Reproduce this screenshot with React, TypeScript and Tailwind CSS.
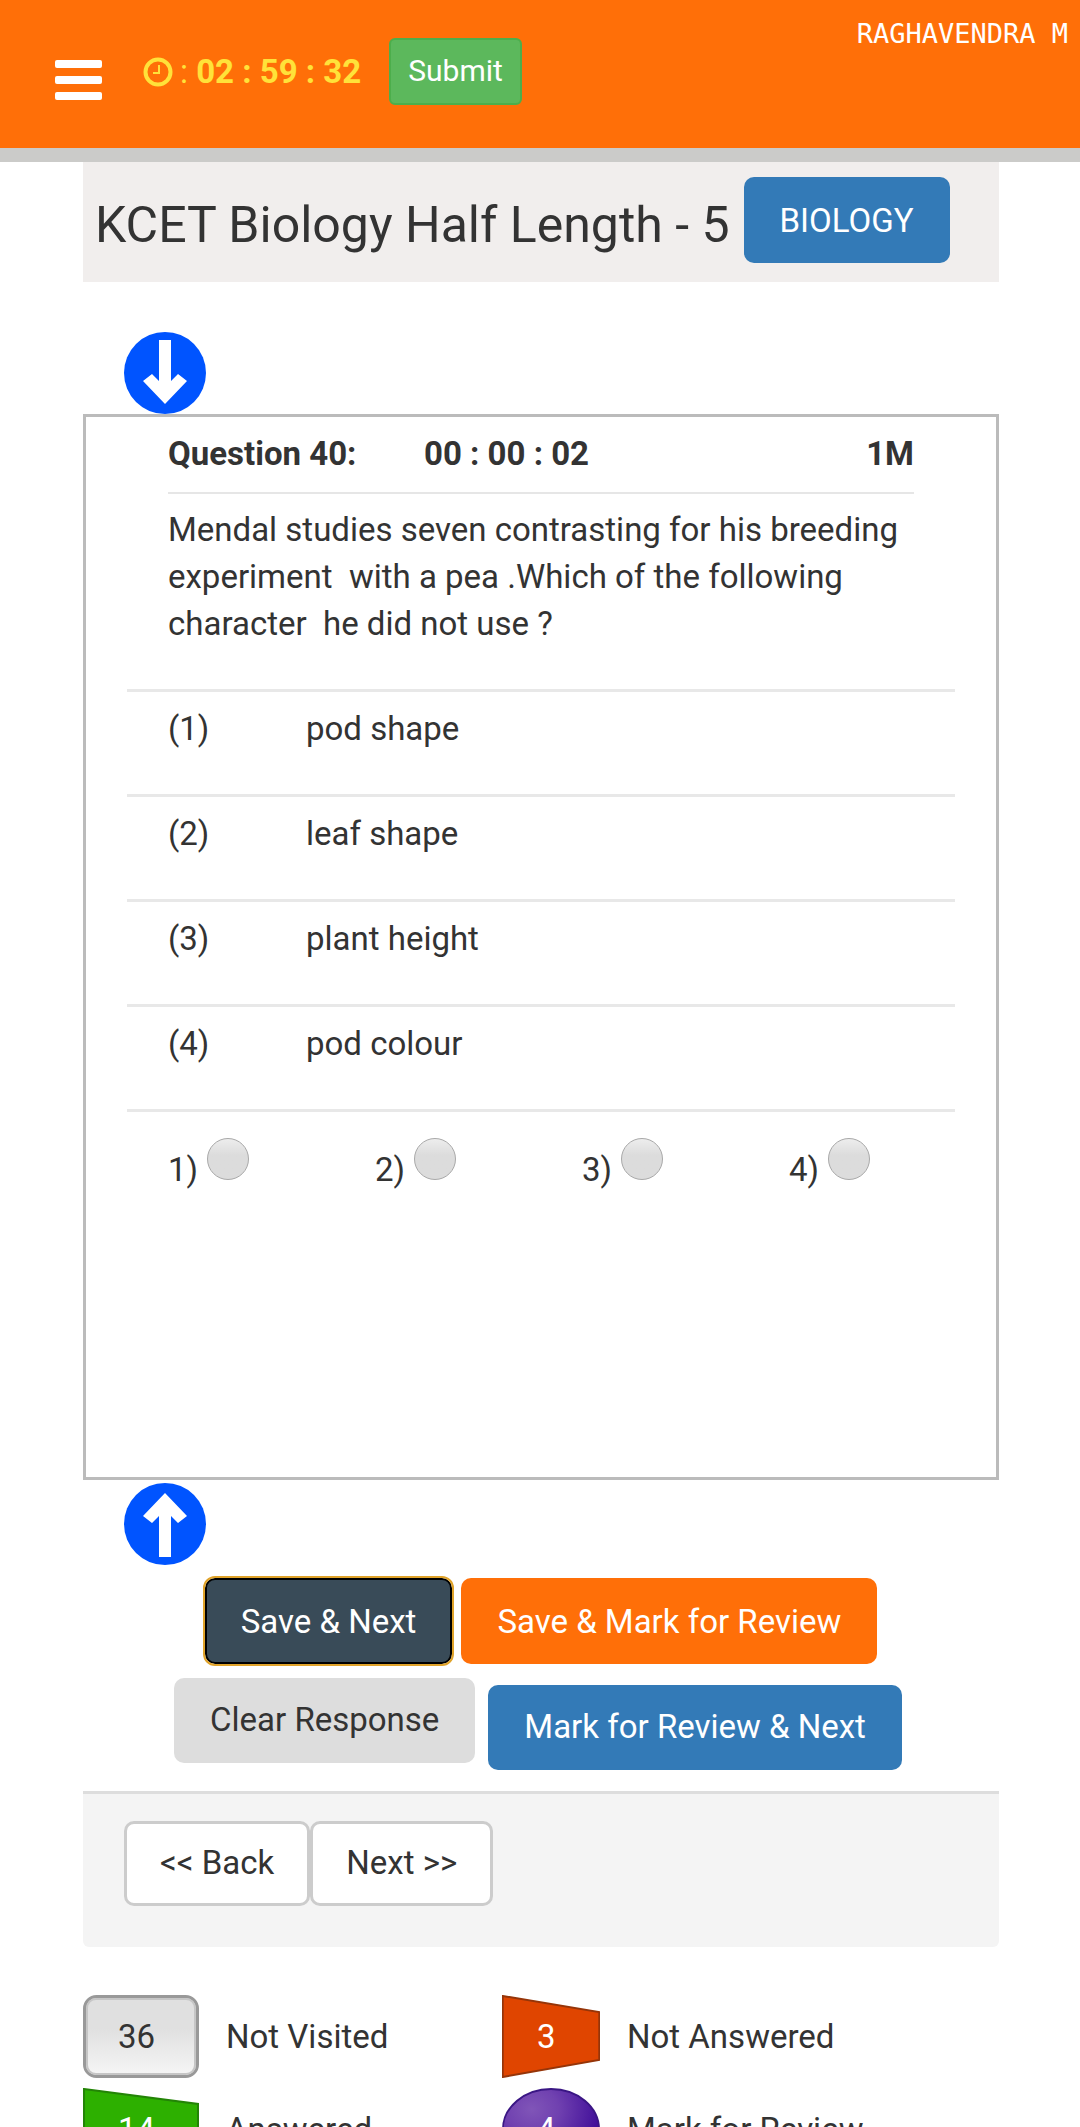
import { useState } from "react";
import type { ReactNode } from "react";

const options = ["pod shape", "leaf shape", "plant height", "pod colour"];

const actionButton = "rounded-[10px] px-[36px] text-white";

function ArrowCircle({ up = false }: { up?: boolean }) {
  return (
    <svg viewBox="0 0 82 82" className="block size-[82px]" aria-hidden="true">
      <circle cx="41" cy="41" r="41" fill="#0054ff" />
      <path
        d="M35 8h12v41l7-7 9 7-22 23-22-23 9-7 7 7z"
        fill="#fff"
        transform={up ? "rotate(180 41 41)" : undefined}
      />
    </svg>
  );
}

function ClockIcon() {
  return (
    <svg viewBox="0 0 30 30" className="size-[30px]" fill="none" stroke="currentColor" aria-hidden="true">
      <circle cx="15" cy="15" r="12.5" strokeWidth="4" />
      <path d="M16 8v8h-6" strokeWidth="2" />
    </svg>
  );
}

function LegendItem({
  count,
  label,
  badgeClass,
  shape,
}: {
  count: number;
  label: string;
  badgeClass: string;
  shape: ReactNode;
}) {
  return (
    <li className="flex items-center gap-[27px]">
      <span className={`relative flex h-[83px] items-center ${badgeClass}`}>
        <svg
          viewBox="0 0 116 83"
          preserveAspectRatio="none"
          className="absolute inset-0 size-full"
          aria-hidden="true"
        >
          {shape}
        </svg>
        <span className="relative">{count}</span>
      </span>
      {label}
    </li>
  );
}

export default function App() {
  const [answer, setAnswer] = useState<number | null>(null);

  return (
    <div className="bg-white font-['Roboto',sans-serif] text-[33px] leading-[47px] text-[#333]">
      <header className="flex h-[162px] items-start border-b-[14px] border-[#cbcbc9] bg-[#ff6f08] pr-[12px] pl-[55px]">
        <button type="button" aria-label="Menu" className="mt-[60px] flex flex-col gap-[8px]">
          <span className="h-[8px] w-[47px] rounded-[2px] bg-white" />
          <span className="h-[8px] w-[47px] rounded-[2px] bg-white" />
          <span className="h-[8px] w-[47px] rounded-[2px] bg-white" />
        </button>
        <div className="mt-[48px] ml-[41px] flex items-center text-[#ffe23a]">
          <ClockIcon />
          <span className="ml-[7px] whitespace-pre">: </span>
          <span className="font-bold">02 : 59 : 32</span>
        </div>
        <button
          type="button"
          className="mt-[38px] ml-[28px] h-[67px] rounded-[6px] border-2 border-[#4cae4c] bg-[#5cb85c] px-[17px] pb-[2px] text-[30px] text-white"
        >
          Submit
        </button>
        <span className="mt-[10px] ml-auto font-['DejaVu_Sans_Mono',monospace] text-[27px] text-white">
          RAGHAVENDRA M
        </span>
      </header>

      <main className="pr-[81px] pl-[83px]">
        <div className="flex h-[120px] items-start gap-[14px] bg-[#f1eeed] pl-[12px]">
          <h1 className="mt-[36px] text-[50px] leading-[55px]">KCET Biology Half Length - 5</h1>
          <button type="button" className={`mt-[15px] h-[86px] bg-[#337ab7] ${actionButton}`}>
            BIOLOGY
          </button>
        </div>

        <button type="button" aria-label="Scroll down" className="mt-[50px] ml-[41px] block">
          <ArrowCircle />
        </button>

        <section className="border-[3px] border-[#bbb] px-[41px] pb-[284px]">
          <div className="px-[41px] pt-[13px] pb-[42px]">
            <div className="flex border-b-2 border-[#e6e6e6] pb-[15px] font-bold">
              <h2 className="w-[256px]">Question 40:</h2>
              <span>00 : 00 : 02</span>
              <span className="ml-auto">1M</span>
            </div>
            <p className="mt-[12px] whitespace-pre-wrap">
              {"Mendal studies seven contrasting for his breeding experiment  with a pea .Which of the following character  he did not use ?"}
            </p>
          </div>

          <ol>
            {options.map((option, index) => (
              <li
                key={option}
                className="flex border-t-[3px] border-[#e8e8e8] px-[41px] pt-[13px] pb-[42px]"
              >
                <span className="w-[138px]">({index + 1})</span>
                <span>{option}</span>
              </li>
            ))}
          </ol>

          <div className="grid grid-cols-4 border-t-[3px] border-[#e8e8e8] pt-[26px]">
            {options.map((option, index) => (
              <label key={option} className="flex items-start gap-[9px] pl-[41px]">
                <span className="pt-[8px]">{index + 1})</span>
                <input
                  type="radio"
                  name="answer"
                  checked={answer === index}
                  onChange={() => setAnswer(index)}
                  className="size-[42px] appearance-none rounded-full border border-[#a8a8a8] bg-linear-to-b from-[#ededed] to-[#dcdcdc] to-40% checked:border-[12px] checked:border-[#337ab7]"
                />
              </label>
            ))}
          </div>
        </section>

        <button type="button" aria-label="Scroll up" className="mt-[3px] ml-[41px] block">
          <ArrowCircle up />
        </button>

        <div className="mt-[13px] flex justify-center gap-[9px]">
          <button
            type="button"
            className="h-[86px] rounded-[10px] border-2 border-black bg-[#394b58] px-[34px] text-white outline-2 outline-[#e0a32a]"
          >
            Save &amp; Next
          </button>
          <button type="button" className={`h-[86px] bg-[#ff6f08] ${actionButton}`}>
            Save &amp; Mark for Review
          </button>
        </div>
        <div className="mt-[14px] flex items-start justify-center gap-[13px] pr-[6px]">
          <button type="button" className="h-[85px] rounded-[10px] bg-[#ddd] px-[36px] pb-[2px]">
            Clear Response
          </button>
          <button type="button" className={`mt-[7px] h-[85px] bg-[#337ab7] pb-[2px] ${actionButton}`}>
            Mark for Review &amp; Next
          </button>
        </div>

        <nav className="mt-[21px] flex h-[156px] items-start rounded-b-[6px] border-t-[3px] border-[#ddd] bg-[#f4f4f4] pt-[27px] pl-[41px]">
          <button type="button" className="h-[85px] rounded-[10px] border-[3px] border-[#ccc] bg-white px-[33px] pb-[2px]">
            &lt;&lt; Back
          </button>
          <button type="button" className="h-[85px] rounded-[10px] border-[3px] border-[#ccc] bg-white px-[33px] pb-[2px]">
            Next &gt;&gt;
          </button>
        </nav>

        <ul className="mt-[48px] grid grid-cols-[419px_1fr] gap-y-[10px]">
          <LegendItem
            count={36}
            label="Not Visited"
            badgeClass="w-[116px] pl-[35px]"
            shape={
              <>
                <defs>
                  <linearGradient id="notVisited" x1="0" y1="0" x2="0" y2="1">
                    <stop offset="0.4" stopColor="#e0e0e0" />
                    <stop offset="1" stopColor="#f6f6f6" />
                  </linearGradient>
                </defs>
                <rect x="1.5" y="1.5" width="113" height="80" rx="12" fill="url(#notVisited)" stroke="#999" strokeWidth="3" />
                <rect x="4" y="4" width="108" height="75" rx="9" fill="none" stroke="#c6c6c6" strokeWidth="2" />
              </>
            }
          />
          <LegendItem
            count={3}
            label="Not Answered"
            badgeClass="w-[98px] pl-[35px] text-white"
            shape={<path d="M1 1L115 17V65L1 82z" fill="#e04500" stroke="#953509" strokeWidth="2" />}
          />
          <LegendItem
            count={14}
            label="Answered"
            badgeClass="w-[116px] pl-[35px] text-white"
            shape={<path d="M1 1L115 16V82H1z" fill="#2db000" stroke="#238406" strokeWidth="2" />}
          />
          <LegendItem
            count={4}
            label="Mark for Review"
            badgeClass="w-[98px] pl-[35px] text-white"
            shape={
              <>
                <defs>
                  <radialGradient id="review" cx="0.3" cy="0.25" r="0.7">
                    <stop offset="0" stopColor="#8055b8" />
                    <stop offset="0.4" stopColor="#7041b0" />
                    <stop offset="1" stopColor="#42109a" />
                  </radialGradient>
                </defs>
                <ellipse cx="58" cy="41.5" rx="57" ry="40.5" fill="url(#review)" stroke="#3a1684" strokeWidth="2" />
              </>
            }
          />
        </ul>
      </main>
    </div>
  );
}
